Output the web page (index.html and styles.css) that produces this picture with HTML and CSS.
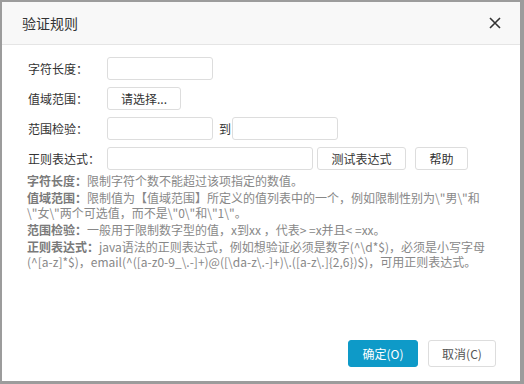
FILE: index.html
```html
<!DOCTYPE html>
<html>
  <head>
    <meta charset="utf-8">
    <link rel="stylesheet" href="styles.css">
  </head>
  <body>
    <div class="dialog">
      <div class="dialog_header">
        <h2 class="title">验证规则</h2>
        <button class="close" title="关闭">
          <svg width="12" height="12" viewBox="0 0 12 12">
            <path d="M1 1L11 11M11 1L1 11" stroke="#333" stroke-width="1.6" fill="none"/>
          </svg>
        </button>
      </div>
      <div class="dialog_body">
        <div class="form">
          <label>字符长度：</label>
          <div class="field"><input type="text" class="text"></div>

          <label>值域范围：</label>
          <div class="field"><button class="btn pick">请选择...</button></div>

          <label>范围检验：</label>
          <div class="field">
            <input type="text" class="text">
            <span class="to">到</span>
            <input type="text" class="text">
          </div>

          <label>正则表达式：</label>
          <div class="field">
            <input type="text" class="text wide">
            <button class="btn test">测试表达式</button>
            <button class="btn help">帮助</button>
          </div>
        </div>

        <div class="tips">
          <p><b>字符长度：</b>限制字符个数不能超过该项指定的数值。</p>
          <p><b>值域范围：</b>限制值为【值域范围】所定义的值列表中的一个，例如限制性别为\"男\"和\"女\"两个可选值，而不是\"0\"和\"1\"。</p>
          <p><b>范围检验：</b>一般用于限制数字型的值，x到xx ，代表&gt; =x并且&lt; =xx。</p>
          <p><b>正则表达式：</b>java语法的正则表达式，例如想验证必须是数字(^\d*$)，必须是小写字母(^[a-z]*$)，email(^([a-z0-9_\.-]+)@([\da-z\.-]+)\.([a-z\.]{2,6})$)，可用正则表达式。</p>
        </div>
      </div>
      <div class="dialog_footer">
        <button class="btn ok">确定(O)</button>
        <button class="btn cancel">取消(C)</button>
      </div>
    </div>
  </body>
</html>
```

FILE: styles.css
```css
*{
    margin:0;
    padding:0;
    box-sizing:border-box;
}
body{
    background-color:#9c9c9c;
    font-family:"Noto Sans CJK SC", "Microsoft YaHei", sans-serif;
    font-size:12px;
    color:#333;
}
.dialog{
    width:518px;
    height:379px;
    margin:2px 0 0 2px;
    background-color:#fff;
    display:flex;
    flex-direction:column;
}
.dialog_header{
    height:43px;
    background-color:#f8f8f8;
    border-bottom:1px solid #e5e5e5;
    display:flex;
    align-items:center;
    justify-content:space-between;
    padding:0 18px 0 20px;
}
.title{
    font-size:14px;
    font-weight:normal;
    color:#333;
}
.close{
    border:0;
    background:none;
    width:14px;
    height:14px;
    display:flex;
    align-items:center;
    justify-content:center;
}
.dialog_body{
    flex:1;
    padding:12px 27px 0 25px;
}
.form{
    display:grid;
    grid-template-columns:80px 1fr;
    row-gap:7px;
    align-items:center;
}
.form label{
    padding-left:1px;
}
.field{
    display:flex;
    align-items:center;
    height:23px;
}
input.text{
    width:106px;
    height:23px;
    border:1px solid #ddd;
    border-radius:3px;
    outline:none;
}
input.wide{
    width:206px;
}
.to{
    width:19px;
    padding-left:6px;
}
.btn{
    height:23px;
    border:1px solid #ddd;
    border-radius:3px;
    background-color:#fff;
    font-family:inherit;
    font-size:12px;
    color:#333;
}
.pick{
    width:74px;
}
.test{
    width:89px;
    margin-left:4px;
}
.help{
    width:53px;
    margin-left:9px;
}
.tips{
    margin-top:3px;
    color:#888;
    line-height:15px;
}
.tips p{
    margin-bottom:2px;
}
.tips b{
    color:#7a7a7a;
}
.dialog_footer{
    display:flex;
    justify-content:flex-end;
    gap:10px;
    padding:0 24px 14px 0;
}
.ok,.cancel{
    height:27px;
    font-size:12px;
}
.ok{
    width:70px;
    background-color:#0e9ac8;
    border-color:#0e9ac8;
    color:#fff;
}
.cancel{
    width:68px;
    color:#555;
}
```
